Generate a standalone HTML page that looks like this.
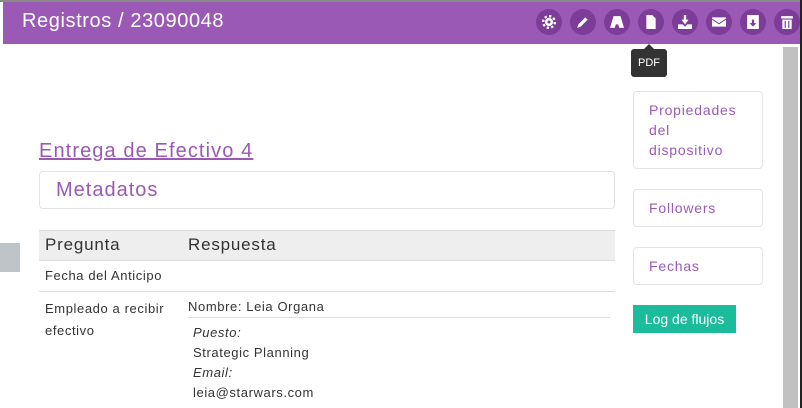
<!DOCTYPE html>
<html><head><meta charset="utf-8"><style>
*{box-sizing:border-box;margin:0;padding:0}
body{width:802px;height:408px;overflow:hidden;background:#fff;font-family:"Liberation Sans",sans-serif;position:relative;letter-spacing:0.5px}
.hdr{position:absolute;left:3px;top:2px;width:797px;height:42px;background:#9b59b6}
.top{position:absolute;left:0;top:0;width:802px;height:2px;background:#888}
.hdr h1{position:absolute;left:19px;top:8px;font-size:20px;font-weight:normal;color:#fff;letter-spacing:0.6px}
.ic{position:absolute;top:9px;width:26px;height:26px;border-radius:50%;background:#7d3c98}
.ic svg{position:absolute;left:6px;top:6px;width:14px;height:14px}
.tip{position:absolute;left:631px;top:49px;width:36px;height:28px;background:#333;border-radius:3px;color:#fff;font-size:11px;text-align:center;line-height:28px;letter-spacing:0}
.tip:before{content:"";position:absolute;left:13px;top:-5px;border:5px solid transparent;border-top:0;border-bottom-color:#333}
.sb{position:absolute;left:783px;top:47px;width:15px;height:361px;background:#c1c1c1}
.dk{position:absolute;left:800px;top:0;width:2px;height:408px;background:#222}
.a{position:absolute;color:#9b59b6}
.box{position:absolute;border:1px solid #e3e3e3;border-radius:4px;color:#9b59b6;font-size:14px;line-height:20px;padding:8px 15px;letter-spacing:0.8px}
.t{position:absolute;font-size:13px;color:#333;letter-spacing:0.6px}
</style></head><body>
<div class="top"></div>
<div class="hdr"><h1>Registros / 23090048</h1></div>
<div class="ic" style="left:536px"><svg viewBox="0 0 12 12"><circle cx="6" cy="6" r="3.5" fill="#fff"/><circle cx="6" cy="6" r="5" fill="none" stroke="#fff" stroke-width="2" stroke-dasharray="2 1.9"/><circle cx="6" cy="6" r="1.3" fill="#7d3c98"/></svg></div>
<div class="ic" style="left:570px"><svg viewBox="0 0 12 12"><path d="M1 11l1-3 6-6 2 2-6 6z" fill="#fff"/></svg></div>
<div class="ic" style="left:604px"><svg viewBox="0 0 12 12"><path d="M0 11L3 1h6l3 10H8L7 8H5l-1 3z" fill="#fff"/></svg></div>
<div class="ic" style="left:638px"><svg viewBox="0 0 12 12"><path d="M2 0h5l3 3v9H2z" fill="#fff"/></svg></div>
<div class="ic" style="left:672px"><svg viewBox="0 0 12 12"><path d="M5 0h2v4h2L6 8 3 4h2zM0 8h4l2 2 2-2h4v4H0z" fill="#fff"/></svg></div>
<div class="ic" style="left:706px"><svg viewBox="0 0 12 12"><path d="M0 2h12v1L6 7 0 3zM0 4l6 4 6-4v6H0z" fill="#fff"/></svg></div>
<div class="ic" style="left:740px"><svg viewBox="0 0 12 12"><path d="M1 0h10v12H1z" fill="#fff"/><path d="M5 4h2v3h2L6 10 3 7h2z" fill="#7d3c98"/></svg></div>
<div class="ic" style="left:774px"><svg viewBox="0 0 12 12"><path d="M1 1h10v2H1zM2 4h8v8H2z" fill="#fff"/><path d="M4 5h1v6H4zM7 5h1v6H7z" fill="#7d3c98"/></svg></div>
<div class="tip">PDF</div>
<div class="sb"></div><div class="dk"></div>
<div style="position:absolute;left:0;top:243px;width:20px;height:29px;background:#bfc4c8"></div>
<div class="a" style="left:39px;top:140px;font-size:20px;text-decoration:underline;letter-spacing:1.1px">Entrega de Efectivo 4</div>
<div class="box" style="left:39px;top:171px;width:576px;height:38px;font-size:20px;line-height:20px;padding:8px 16px;letter-spacing:1px">Metadatos</div>
<div style="position:absolute;left:39px;top:230px;width:576px;height:31px;background:#eee;border-top:1px solid #ddd;border-bottom:1px solid #ddd"></div>
<div class="t" style="left:45px;top:235px;font-size:17px;letter-spacing:0.8px">Pregunta</div>
<div class="t" style="left:188px;top:235px;font-size:17px;letter-spacing:0.8px">Respuesta</div>
<div class="t" style="left:45px;top:268px">Fecha del Anticipo</div>
<div style="position:absolute;left:39px;top:291px;width:576px;height:1px;background:#ddd"></div>
<div class="t" style="left:45px;top:298px;line-height:22px">Empleado a recibir<br>efectivo</div>
<div class="t" style="left:188px;top:299px">Nombre: Leia Organa</div>
<div style="position:absolute;left:188px;top:317px;width:422px;height:1px;background:#ddd"></div>
<div class="t" style="left:193px;top:323px;line-height:20px"><i>Puesto:</i><br>Strategic Planning<br><i>Email:</i><br>leia@starwars.com</div>
<div class="box" style="left:633px;top:91px;width:130px;height:78px;padding-right:20px">Propiedades del dispositivo</div>
<div class="box" style="left:633px;top:189px;width:130px;height:38px">Followers</div>
<div class="box" style="left:633px;top:247px;width:130px;height:38px">Fechas</div>
<div style="position:absolute;left:633px;top:305px;width:103px;height:28px;background:#1abc9c;color:#fff;font-size:14px;text-align:center;line-height:28px;letter-spacing:0">Log de flujos</div>
</body></html>
